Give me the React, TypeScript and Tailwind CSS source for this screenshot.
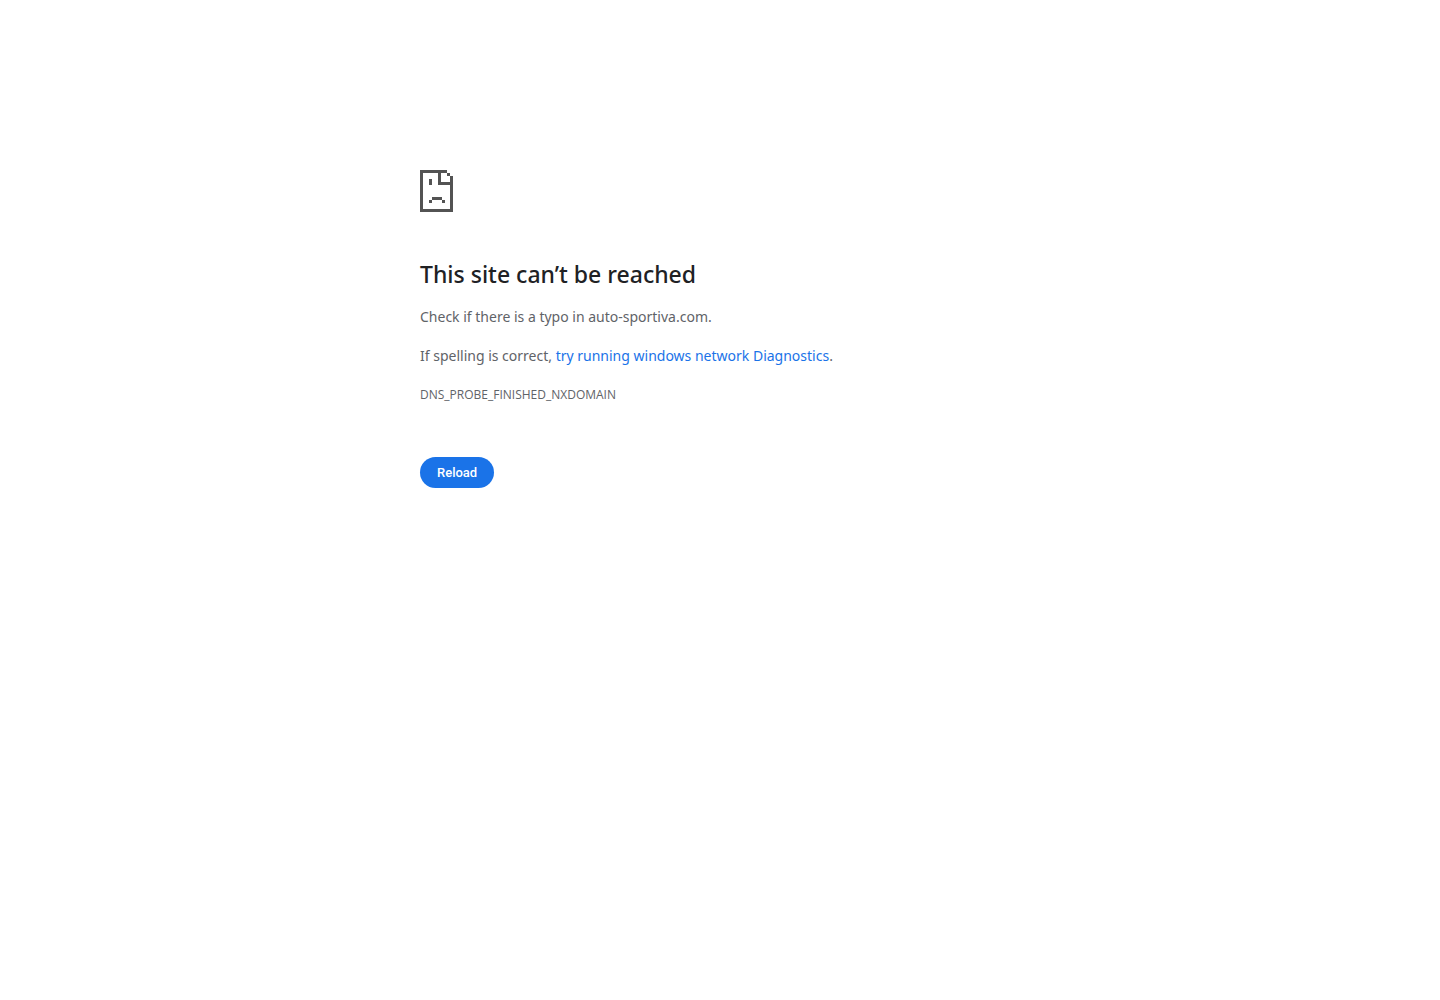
function SadPageIcon() {
  return (
    <svg
      className="h-[42px] w-[33px]"
      viewBox="0 0 33 42"
      fill="#535353"
      shapeRendering="crispEdges"
      aria-hidden="true"
    >
      {/* page outline and folded corner */}
      <path d="M0 0h27v3H0zM0 3h3v36H0zM0 39h33v3H0zM30 6h3v33h-3zM27 3h3v3h-3zM18 3h3v9h-3zM18 12h12v3H18z" />
      {/* face */}
      <path d="M9 9h3v6H9zM12 27h10v3H12zM9 30h3v3H9zM22 30h3v3h-3z" />
    </svg>
  );
}

export default function App() {
  return (
    <main className="mx-auto max-w-[600px] pt-[170px] font-['Noto_Sans','Open_Sans',sans-serif] text-sm leading-[19px] text-[#5f6368]">
      <SadPageIcon />
      <h1 className="mt-12 text-[23px] leading-7 font-medium text-[#202124]">
        This site can’t be reached
      </h1>
      <p className="mt-[19px]">Check if there is a typo in auto-sportiva.com.</p>
      <p className="mt-5">
        If spelling is correct,{" "}
        <a href="#diagnostics" className="text-[#1a73e8]">
          try running windows network Diagnostics
        </a>
        .
      </p>
      <p className="mt-5 font-['Open_Sans',sans-serif] text-xs leading-[19px]">DNS_PROBE_FINISHED_NXDOMAIN</p>
      <button
        type="button"
        onClick={() => window.location.reload()}
        className="mt-[53px] h-[31px] cursor-pointer rounded-full bg-[#1a73e8] px-[17px] font-['Roboto',sans-serif] text-[13px] font-medium text-white"
      >
        Reload
      </button>
    </main>
  );
}
